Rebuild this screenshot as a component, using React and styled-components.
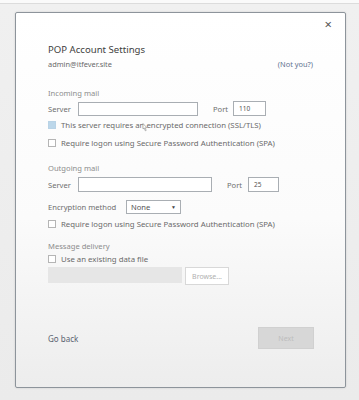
import React from "react";
import styled, { createGlobalStyle } from "styled-components";

const Global = createGlobalStyle`
  html, body { margin: 0; padding: 0; }
  body {
    width: 359px; height: 400px; overflow: hidden;
    font-family: "Noto Sans", "Open Sans", sans-serif;
    background: linear-gradient(#f3f3f3, #e9e9e9);
  }
`;

const Page = styled.div`
  width: 359px; height: 400px;
  display: flex; flex-direction: column;
`;

const TopStrip = styled.div`
  height: 3px; background: #fafafa; border-bottom: 1px solid #dcdcdc;
`;

const Stage = styled.div`
  flex: 1; padding: 8px 13px 12px 15px;
  background: linear-gradient(#f0f0f0, #ebebeb);
  display: flex;
`;

const Dialog = styled.div`
  position: relative;
  flex: 1;
  border: 1.5px solid #8d949b;
  border-radius: 2px;
  background: linear-gradient(#ffffff 0%, #fbfbfb 55%, #ededed 100%);
  box-shadow: 0 0 2px rgba(0,0,0,0.15);
  padding: 30px 31px 0 32px;
  display: flex; flex-direction: column;
`;

const Close = styled.div`
  position: absolute; right: 13px; top: 5px;
  font-size: 13px; color: #555; line-height: 1;
`;

const Title = styled.div`
  font-size: 9.6px; color: #3e3e3e; line-height: 14px;
`;

const AccountRow = styled.div`
  display: flex; justify-content: space-between; align-items: center;
  margin-top: 2px; padding-right: 1px;
  font-size: 7.4px; line-height: 10px; color: #6a6a6a;
`;

const NotYou = styled.span`
  color: #5e7290;
`;

const Section = styled.div`
  font-size: 7.6px; color: #8d8d8d; line-height: 10px;
  margin-top: ${p => p.$mt}px;
`;

const FieldRow = styled.div`
  display: flex; align-items: center;
  margin-top: ${p => p.$mt || 0}px;
  height: 15px;
`;

const Label = styled.span`
  font-size: 7.6px; color: #6e6e6e; width: ${p => p.$w}px;
  flex: none;
`;

const Input = styled.div`
  width: ${p => p.$w}px; height: ${p => p.$h || 14}px;
  border: 1px solid #a9aeb3; background: #fff; box-sizing: border-box;
  margin-right: ${p => p.$mr || 0}px;
  font-size: 6.5px; color: #555; display: flex; align-items: center;
  padding-left: 5px; flex: none;
`;

const CheckRow = styled.div`
  display: flex; align-items: center; gap: 5px;
  margin-top: ${p => p.$mt}px; height: 10px;
  position: relative;
  font-size: 7.8px; color: #6a6a6a; white-space: nowrap;
`;

const Box = styled.span`
  width: 8px; height: 8px; box-sizing: border-box; flex: none;
  border: 1px solid ${p => (p.$on ? "#b9d3e6" : "#b5b5b5")};
  background: ${p => (p.$on ? "#bcd7ea" : "#fff")};
`;

const Select = styled.div`
  width: 55px; height: 14px; box-sizing: border-box;
  border: 1px solid #a9aeb3; background: #fff;
  display: flex; align-items: center; justify-content: space-between;
  padding: 0 4px 0 4px; font-size: 7.6px; color: #555;
`;

const Caret = styled.span`
  font-size: 5px; color: #444;
`;

const FileRow = styled.div`
  display: flex; gap: 3px; margin-top: 3px; align-items: flex-start;
`;

const GrayField = styled.div`
  width: 134px; height: 16px; background: #e6e6e6;
`;

const Browse = styled.div`
  width: 44px; height: 18px; box-sizing: border-box;
  border: 1px solid #d8d8d8; background: #fff;
  font-size: 7px; color: #b0b0b0;
  display: flex; align-items: center; justify-content: center;
`;

const Footer = styled.div`
  display: flex; justify-content: space-between; align-items: center;
  margin-top: 42px;
`;

const GoBack = styled.span`
  font-size: 8px; color: #5a6270;
`;

const Next = styled.div`
  width: 56px; height: 22px; background: #d7d7d7;
  border: 1px solid #d0d0d0; box-sizing: border-box;
  font-size: 7px; color: #bdbdbd;
  display: flex; align-items: center; justify-content: center;
`;

const Cursor = styled.svg`
  position: absolute; left: 93px; top: 3px;
`;

export default function App() {
  return (
    <Page>
      <Global />
      <TopStrip />
      <Stage>
        <Dialog>
          <Close>×</Close>
          <Title>POP Account Settings</Title>
          <AccountRow>
            <span>admin@itfever.site</span>
            <NotYou>(Not you?)</NotYou>
          </AccountRow>
          <Section $mt={19}>Incoming mail</Section>
          <FieldRow $mt={3}>
            <Label $w={30}>Server</Label>
            <Input $w={120} $mr={15} />
            <Label $w={20}>Port</Label>
            <Input $w={33} $h={15}>110</Input>
          </FieldRow>
          <CheckRow $mt={4}>
            <Box $on />
            This server requires an encrypted connection (SSL/TLS)
            <Cursor width="7" height="9" viewBox="0 0 7 9">
              <path d="M2 0.5 L2 6 L3.2 5 L4.3 7.8 L5.2 7.4 L4.1 4.8 L5.8 4.7 Z" fill="#fff" stroke="#8a8a8a" strokeWidth="0.6" />
            </Cursor>
          </CheckRow>
          <CheckRow $mt={8}>
            <Box />
            Require logon using Secure Password Authentication (SPA)
          </CheckRow>
          <Section $mt={15}>Outgoing mail</Section>
          <FieldRow $mt={4}>
            <Label $w={30}>Server</Label>
            <Input $w={134} $mr={15} $h={15} />
            <Label $w={21}>Port</Label>
            <Input $w={31} $h={15}>25</Input>
          </FieldRow>
          <FieldRow $mt={7}>
            <Label $w={78}>Encryption method</Label>
            <Select>
              None<Caret>▼</Caret>
            </Select>
          </FieldRow>
          <CheckRow $mt={5}>
            <Box />
            Require logon using Secure Password Authentication (SPA)
          </CheckRow>
          <Section $mt={12}>Message delivery</Section>
          <CheckRow $mt={3}>
            <Box />
            Use an existing data file
          </CheckRow>
          <FileRow>
            <GrayField />
            <Browse>Browse...</Browse>
          </FileRow>
          <Footer>
            <GoBack>Go back</GoBack>
            <Next>Next</Next>
          </Footer>
        </Dialog>
      </Stage>
    </Page>
  );
}
